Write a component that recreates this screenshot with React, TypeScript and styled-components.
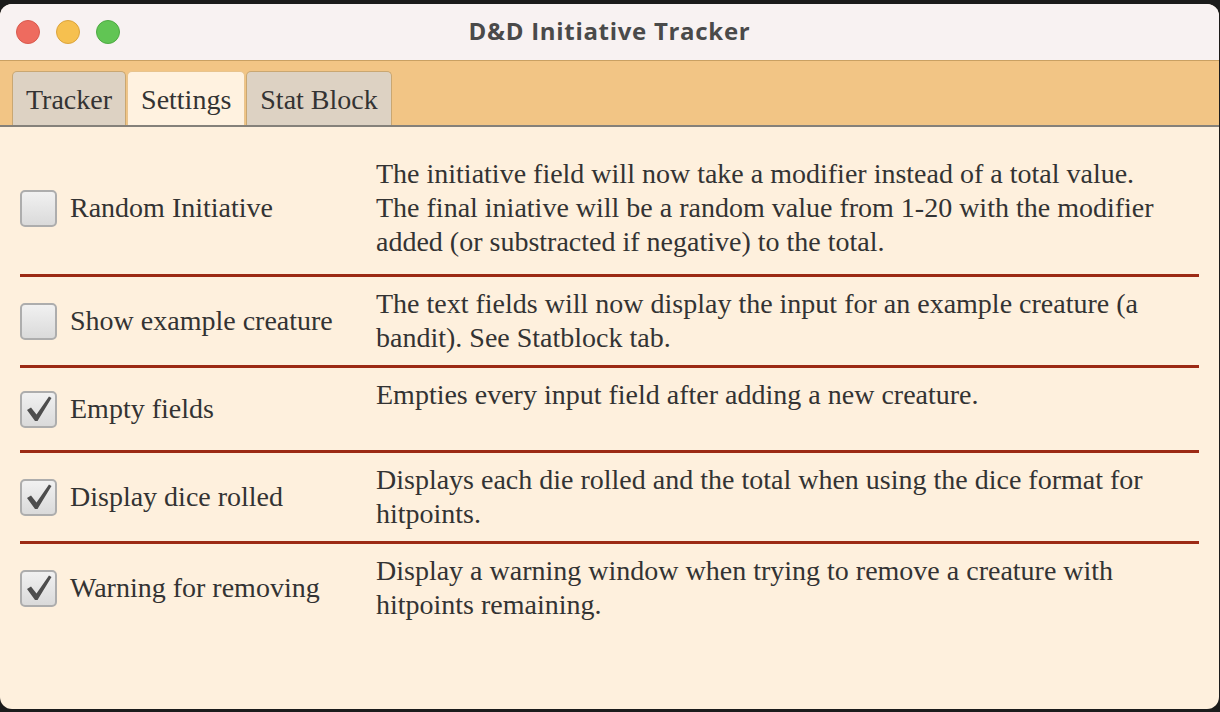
import styled, { createGlobalStyle } from 'styled-components'

const serif = `"Liberation Serif", "Times New Roman", serif`

const Global = createGlobalStyle`
    html, body {
        margin: 0;
        padding: 0;
        background: #1b1b1b;
        width: 1220px;
        height: 712px;
        overflow: hidden;
    }
`

const Window = styled.div`
    margin-top: 4px;
    width: 1219px;
    height: 705px;
    border-radius: 12px;
    overflow: hidden;
    background-color: #fef0dd;
    display: flex;
    flex-direction: column;
`

const TitleBar = styled.div`
    position: relative;
    height: 56px;
    flex: none;
    background-color: #f8f2f2;
    display: flex;
    align-items: center;
    justify-content: center;
`

const Lights = styled.div`
    position: absolute;
    left: 16px;
    top: 16px;
    display: flex;
    gap: 16px;
`

const Light = styled.span<{ color: string; edge: string }>`
    width: 24px;
    height: 24px;
    border-radius: 50%;
    box-sizing: border-box;
    background-color: ${(p) => p.color};
    border: 1px solid ${(p) => p.edge};
`

const Title = styled.div`
    font-family: "Open Sans", Inter, "Liberation Sans", sans-serif;
    font-weight: 700;
    font-size: 24px;
    letter-spacing: 0.7px;
    color: #4a4a4a;
    margin-top: -3px;
`

const TabBar = styled.div`
    height: 67px;
    flex: none;
    box-sizing: border-box;
    background-color: #f2c585;
    border-top: 1px solid #c9a062;
    border-bottom: 2px solid #85817a;
    display: flex;
    align-items: flex-end;
    padding-left: 12px;
    gap: 1px;
`

const Tab = styled.div<{ selected?: boolean }>`
    height: 54px;
    box-sizing: border-box;
    padding: 2px 13px 0;
    display: flex;
    align-items: center;
    border-radius: 5px 5px 0 0;
    border: 1px solid ${(p) => (p.selected ? '#e8c48e' : '#c9a772')};
    border-bottom: none;
    background-color: ${(p) => (p.selected ? '#fff2e0' : '#ddd2c3')};
    font-family: ${serif};
    font-size: 28px;
    color: #333;
`

const List = styled.div`
    padding: 20px 20px 0 20px;
    display: flex;
    flex-direction: column;
`

const Row = styled.div`
    display: grid;
    grid-template-columns: 356px 1fr;
    padding: 10px 0;
    border-bottom: 3px solid #9c2a14;

    &:first-child {
        padding-bottom: 15px;
    }

    &:last-child {
        border-bottom: none;
    }
`

const Option = styled.label`
    display: flex;
    align-items: center;
    gap: 13px;
    font-family: ${serif};
    font-size: 28px;
    color: #333;
`

const Box = styled.span`
    width: 37px;
    height: 37px;
    flex: none;
    box-sizing: border-box;
    border: 2px solid #adadad;
    border-radius: 5px;
    background: linear-gradient(#f1f1f1, #dadada);
    display: flex;
    align-items: center;
    justify-content: center;
`

const Description = styled.div`
    min-height: 62px;
    font-family: ${serif};
    font-size: 28px;
    line-height: 34px;
    color: #333;
    white-space: pre-line;
`

function Check() {
    return (
        <svg width="28" height="28" viewBox="0 0 28 28">
            <path d="M2 15 L6 12.5 L11.5 19.5 L24 1.5 L26.5 3 L12.5 26 L10 26 Z" fill="#4d4d4d" />
        </svg>
    )
}

type Setting = { label: string; checked: boolean; text: string }

const settings: Setting[] = [
    {
        label: 'Random Initiative',
        checked: false,
        text: 'The initiative field will now take a modifier instead of a total value.\nThe final iniative will be a random value from 1-20 with the modifier\nadded (or substracted if negative) to the total.',
    },
    {
        label: 'Show example creature',
        checked: false,
        text: 'The text fields will now display the input for an example creature (a\nbandit). See Statblock tab.',
    },
    {
        label: 'Empty fields',
        checked: true,
        text: 'Empties every input field after adding a new creature.',
    },
    {
        label: 'Display dice rolled',
        checked: true,
        text: 'Displays each die rolled and the total when using the dice format for\nhitpoints.',
    },
    {
        label: 'Warning for removing',
        checked: true,
        text: 'Display a warning window when trying to remove a creature with\nhitpoints remaining.',
    },
]

export default function App() {
    return (
        <>
            <Global />
            <Window>
                <TitleBar>
                    <Lights>
                        <Light color="#ee6b5f" edge="#d95a4e" />
                        <Light color="#f6c04f" edge="#dca43c" />
                        <Light color="#61c554" edge="#4eaa43" />
                    </Lights>
                    <Title>D&amp;D Initiative Tracker</Title>
                </TitleBar>
                <TabBar>
                    <Tab>Tracker</Tab>
                    <Tab selected>Settings</Tab>
                    <Tab>Stat Block</Tab>
                </TabBar>
                <List>
                    {settings.map((s) => (
                        <Row key={s.label}>
                            <Option>
                                <Box>{s.checked && <Check />}</Box>
                                {s.label}
                            </Option>
                            <Description>{s.text}</Description>
                        </Row>
                    ))}
                </List>
            </Window>
        </>
    )
}
